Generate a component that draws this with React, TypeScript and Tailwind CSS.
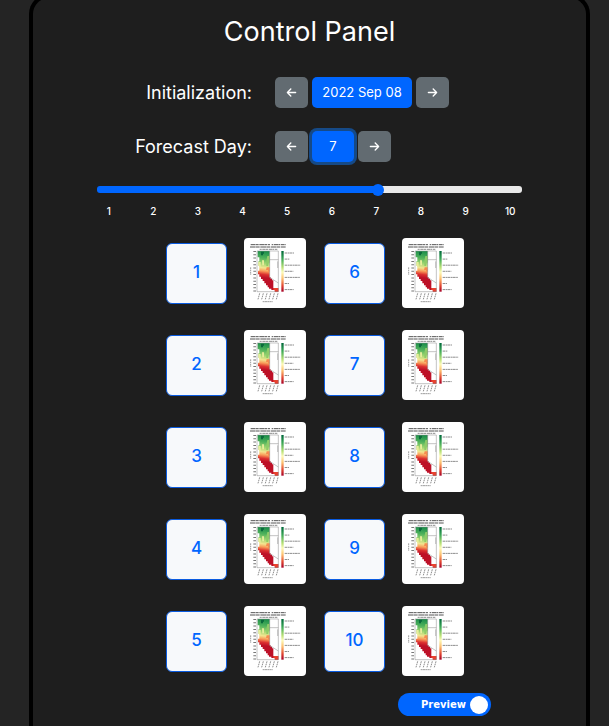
import { useState } from "react";
import { FaArrowLeft, FaArrowRight } from "react-icons/fa6";

const DAYS = [1, 2, 3, 4, 5, 6, 7, 8, 9, 10];
const ROWS = [1, 2, 3, 4, 5];
const DATES = ["2022 Sep 07", "2022 Sep 08", "2022 Sep 09"];

const LEGEND_WIDTHS = [28, 14, 47, 26, 46, 13, 27];

function ForecastMap() {
  return (
    <svg viewBox="0 0 186 210" className="block h-full w-full" aria-hidden="true">
      <defs>
        <linearGradient id="scale" x1="0" y1="0" x2="0" y2="1">
          <stop offset="0" stopColor="#00683a" />
          <stop offset="0.2" stopColor="#3faa59" />
          <stop offset="0.4" stopColor="#b7e075" />
          <stop offset="0.52" stopColor="#fdfbb8" />
          <stop offset="0.68" stopColor="#fdbf6f" />
          <stop offset="0.85" stopColor="#e34a33" />
          <stop offset="1" stopColor="#a50026" />
        </linearGradient>
        <linearGradient id="state" gradientUnits="userSpaceOnUse" x1="72" y1="39" x2="58" y2="161">
          <stop offset="0" stopColor="#168a48" />
          <stop offset="0.18" stopColor="#4fb25c" />
          <stop offset="0.32" stopColor="#a5d873" />
          <stop offset="0.42" stopColor="#f3e590" />
          <stop offset="0.5" stopColor="#f99a58" />
          <stop offset="0.58" stopColor="#dc3030" />
          <stop offset="0.66" stopColor="#bd1027" />
          <stop offset="1" stopColor="#bd1027" />
        </linearGradient>
      </defs>
      <g stroke="#555" fill="none" strokeWidth="3">
        <path d="M20 20H78" strokeDasharray="14 1 9 2" />
        <path d="M83 20H125" strokeDasharray="5 2 12 1" />
        <path d="M18 27H125" strokeDasharray="17 1 11 2" />
        <path d="M47 34H100" strokeDasharray="6 2 10 1" strokeWidth="2" />
      </g>
      <path
        d="M41 39H77V118H80V122H84V127H88V150H103V161H92V156H82V152H75V148H71V142H66V136H61V129H56V123H51V116H46V109H42V98H46V84H43V70H46V58H41Z"
        fill="url(#state)"
      />
      <path d="M51 41H60V47H57V52H51Z" fill="#0b6a3c" />
      <path d="M70 54H77V74H72V84H67V68Z" fill="#8ecb68" />
      <path d="M43 72H50V88H46ZM54 67H60V82H55Z" fill="#e8ed9b" />
      <path d="M68 88H77V101H72V96H66Z" fill="#f68a50" />
      <path d="M88 150H103V161H93V156H88Z" fill="#e8422f" />
      <g fill="none" stroke="#888" strokeWidth="1.5">
        <path d="M39 39H103V161H39Z" />
        <path d="M77 65H103M77 39V118L103 135M101 70V90" />
      </g>
      <path d="M32 39V162" stroke="#777" strokeWidth="8" strokeDasharray="3 6.9" />
      <path d="M20 88V111" stroke="#888" strokeWidth="2.5" strokeDasharray="5 2" />
      <g stroke="#777" strokeWidth="2.5" strokeDasharray="5 2">
        <path d="M47 166L42 184M58 166L53 184M69 166L64 184M80 166L75 184M91 166L86 184M102 166L97 184" />
      </g>
      <path d="M56 191H86" stroke="#888" strokeWidth="2.5" strokeDasharray="6 1" />
      <rect x="112" y="39" width="7" height="122" fill="url(#scale)" />
      {LEGEND_WIDTHS.map((w, i) => (
        <path
          key={i}
          d={`M122 ${45 + i * 18.3}h${w}`}
          stroke="#777"
          strokeWidth="2.5"
          strokeDasharray="8 1.5 5 1"
        />
      ))}
    </svg>
  );
}

function StepButton({ dir, label, onClick }: { dir: "prev" | "next"; label: string; onClick: () => void }) {
  return (
    <button
      type="button"
      aria-label={label}
      onClick={onClick}
      className="flex h-[31px] w-[33px] items-center justify-center rounded-[5px] bg-[#626b71] text-[11px] text-white"
    >
      {dir === "prev" ? <FaArrowLeft /> : <FaArrowRight />}
    </button>
  );
}

export default function App() {
  const [day, setDay] = useState(7);
  const [date, setDate] = useState(1);
  const [preview, setPreview] = useState(true);
  const fill = ((day - 1) / 9) * 100;
  const move = (d: number) => setDay(Math.min(10, Math.max(1, d)));

  return (
    <div className="min-h-screen overflow-hidden bg-[#242424] font-['Inter','Liberation_Sans',sans-serif] text-white">
      <main className="-mt-1.5 mr-[19px] ml-[29px] min-h-[calc(100vh+6px)] rounded-t-[20px] border-4 border-b-0 border-black bg-[#1e1e1e] pt-4">
        <h1 className="text-center text-[27px] leading-9">Control Panel</h1>

        <div className="mt-[27px] flex flex-col gap-[23px]">
          <div className="flex items-center">
            <h2 className="mr-[23px] w-[219px] text-right text-lg leading-6">Initialization:</h2>
            <div className="flex gap-1">
              <StepButton dir="prev" label="Previous initialization" onClick={() => setDate(Math.max(0, date - 1))} />
              <button type="button" className="h-[31px] w-[100px] rounded-[5px] bg-[#0066ff] text-[13px]">
                {DATES[date]}
              </button>
              <StepButton dir="next" label="Next initialization" onClick={() => setDate(Math.min(2, date + 1))} />
            </div>
          </div>
          <div className="flex items-center">
            <h2 className="mr-[23px] w-[219px] text-right text-lg leading-6">Forecast Day:</h2>
            <div className="flex gap-1">
              <StepButton dir="prev" label="Previous day" onClick={() => move(day - 1)} />
              <button type="button" className="h-[31px] w-[42px] rounded-[5px] bg-[#0066ff] text-[13px] ring-3 ring-[#164a87]">
                {day}
              </button>
              <StepButton dir="next" label="Next day" onClick={() => move(day + 1)} />
            </div>
          </div>
        </div>

        <input
          type="range"
          aria-label="Forecast day"
          min={1}
          max={10}
          value={day}
          onChange={(e) => move(Number(e.target.value))}
          style={{
            backgroundImage: `linear-gradient(to right, #0066ff ${fill}%, #e9e9e9 ${fill}%)`,
          }}
          className="mx-auto mt-6 block h-[7px] w-[425px] max-w-full appearance-none rounded-[3px] [&::-webkit-slider-thumb]:size-3 [&::-webkit-slider-thumb]:appearance-none [&::-webkit-slider-thumb]:rounded-full [&::-webkit-slider-thumb]:bg-[#0066ff]"
        />
        <div className="mx-auto mt-[10px] grid w-[446px] max-w-full grid-cols-10 text-center text-[10px] leading-4 font-medium">
          {DAYS.map((d) => (
            <span key={d}>{d}</span>
          ))}
        </div>

        <div className="mt-[19px] flex flex-col items-center gap-[22px] pl-[11px]">
          {ROWS.map((r) => (
            <div key={r} className="flex items-center gap-[18px]">
              {[r, r + 5].map((d) => (
                <div key={d} className="flex items-center gap-[17px]">
                  <button
                    type="button"
                    onClick={() => move(d)}
                    className="size-[61px] rounded-md border border-[#0a5be0] bg-[#f7f9fb] text-[17px] font-medium text-[#0066ff]"
                  >
                    {d}
                  </button>
                  <div role="img" aria-label={`Forecast map, day ${d}`} className="h-[70px] w-[62px] rounded bg-white">
                    <ForecastMap />
                  </div>
                </div>
              ))}
            </div>
          ))}
        </div>

        <div className="mt-[17px] mr-[95px] flex justify-end">
          <label className="flex h-[23px] w-[93px] items-center justify-end gap-1 rounded-full bg-[#0066ff] pr-[3px] font-['DejaVu_Sans',sans-serif] text-[10px] font-bold">
            Preview
            <input
              type="checkbox"
              checked={preview}
              onChange={(e) => setPreview(e.target.checked)}
              className="size-[18px] appearance-none rounded-full bg-white"
            />
          </label>
        </div>
      </main>
    </div>
  );
}
